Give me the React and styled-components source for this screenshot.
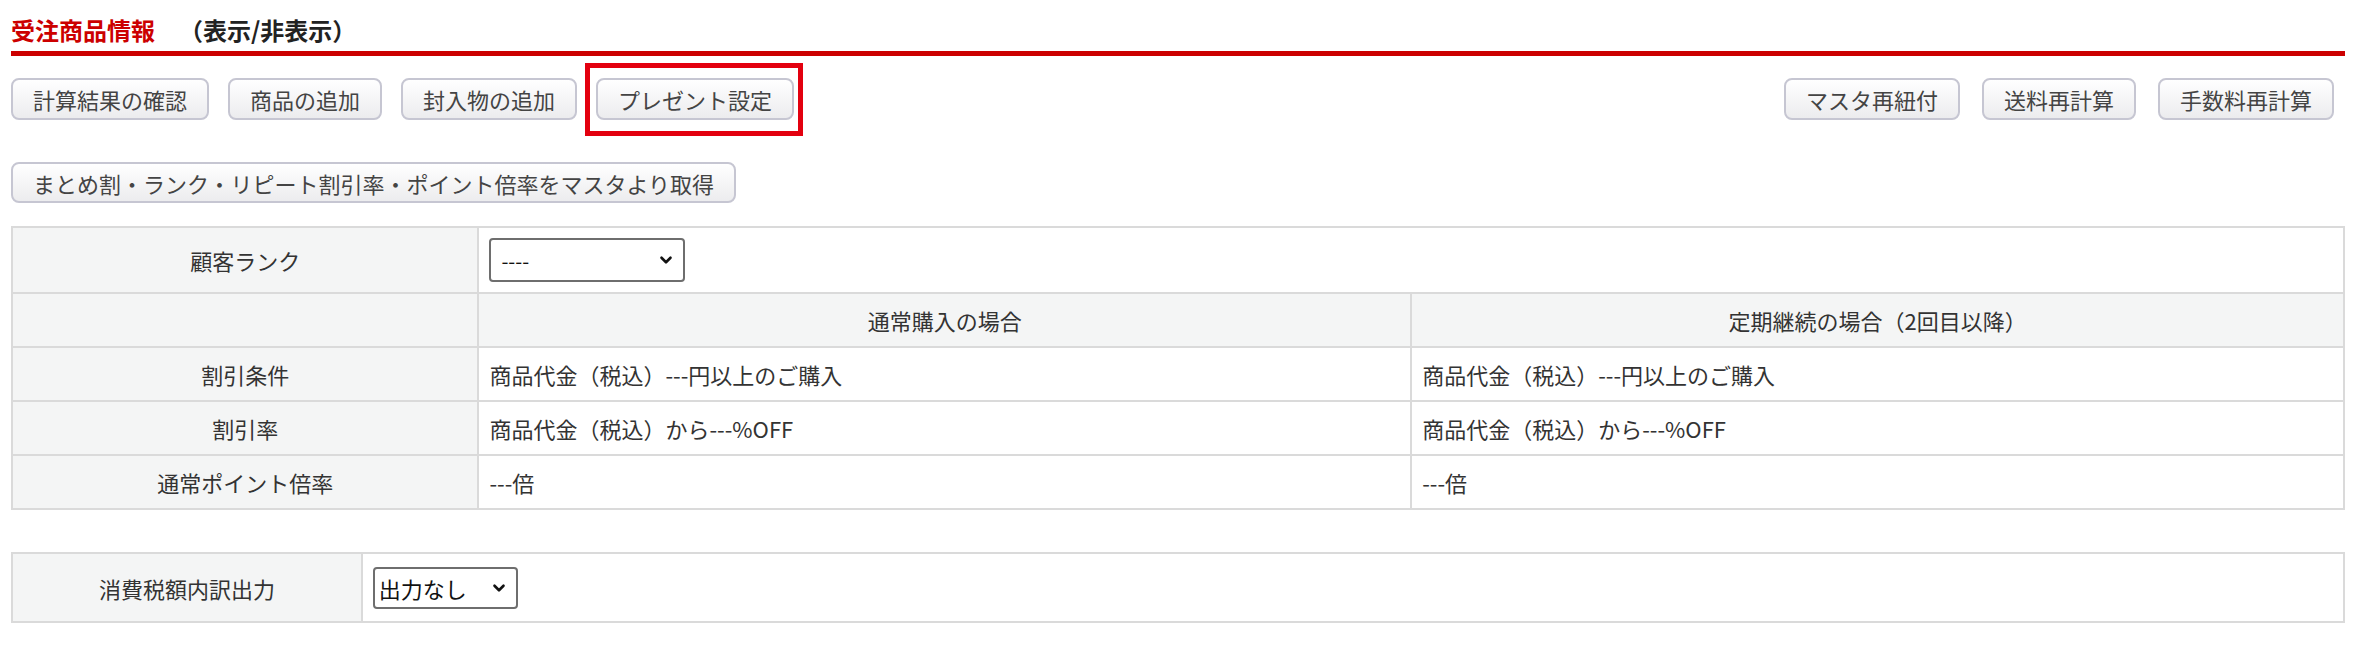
import React from "react";
import styled, { createGlobalStyle } from "styled-components";
import { ChevronDown } from "lucide-react";

const GlobalStyle = createGlobalStyle`
  body {
    margin: 0;
    background: #ffffff;
    font-family: "Noto Sans CJK JP", "Noto Sans", sans-serif;
    color: #333333;
  }
`;

const Page = styled.div`
  padding: 0 12px 30px 11px;
`;

const Header = styled.div`
  display: flex;
  align-items: center;
  padding-top: 8px;
  height: 43px;
  border-bottom: 5px solid #cc0000;
`;

const Title = styled.h2`
  margin: 0;
  font-size: 24px;
  line-height: 34px;
  font-weight: 700;
  color: #cc0000;
`;

const Toggle = styled.span`
  margin-left: 24px;
  font-size: 24px;
  line-height: 34px;
  font-weight: 700;
  color: #222222;
  cursor: pointer;
`;

const Toolbar = styled.div`
  display: flex;
  justify-content: space-between;
  align-items: center;
  margin-top: 22px;
  padding-right: ${(p) => p.$inset || 0}px;
`;

const Group = styled.div`
  display: flex;
  gap: ${(p) => p.$gap}px;
`;

const Button = styled.button`
  height: ${(p) => p.$h || 42}px;
  padding: 0 20px;
  border: 2px solid #c6c6d2;
  border-radius: 8px;
  background: linear-gradient(#ffffff, #ececee);
  font-family: inherit;
  font-size: 22px;
  color: #444444;
  white-space: nowrap;
  cursor: pointer;
`;

const Highlight = styled.span`
  position: relative;
  display: inline-flex;
  &::after {
    content: "";
    position: absolute;
    top: -15px;
    bottom: -16px;
    left: -11px;
    right: -9px;
    border: 5px solid #e3000f;
    pointer-events: none;
  }
`;

const Row = styled.div`
  margin-top: ${(p) => p.$top}px;
`;

const Table = styled.table`
  width: 100%;
  border-collapse: collapse;
  table-layout: fixed;
  margin-top: ${(p) => p.$top}px;
  font-size: 22px;
  color: #333333;
`;

const Th = styled.th`
  background: #f4f5f5;
  border: 2px solid #dadada;
  font-weight: 400;
  text-align: center;
  height: ${(p) => p.$h || 52}px;
  padding: 0 12px;
`;

const Td = styled.td`
  border: 2px solid #dadada;
  background: #ffffff;
  height: ${(p) => p.$h || 52}px;
  padding: 0 10px;
`;

const Select = styled.div`
  display: inline-flex;
  align-items: center;
  justify-content: space-between;
  box-sizing: border-box;
  width: ${(p) => p.$w}px;
  height: ${(p) => p.$h}px;
  padding: 0 8px 0 ${(p) => p.$pl}px;
  border: 2px solid #6e6e6e;
  border-radius: 4px;
  background: #ffffff;
  color: #111111;
  font-size: ${(p) => p.$fs}px;
`;

const Chevron = styled(ChevronDown)`
  color: #111111;
  flex: none;
`;

const leftButtons = ["計算結果の確認", "商品の追加", "封入物の追加"];
const rightButtons = ["マスタ再紐付", "送料再計算", "手数料再計算"];

const rows = [
  ["割引条件", "商品代金（税込）---円以上のご購入", "商品代金（税込）---円以上のご購入"],
  ["割引率", "商品代金（税込）から---%OFF", "商品代金（税込）から---%OFF"],
  ["通常ポイント倍率", "---倍", "---倍"],
];

export default function App() {
  return (
    <>
      <GlobalStyle />
      <Page>
        <Header>
          <Title>受注商品情報</Title>
          <Toggle>（表示/非表示）</Toggle>
        </Header>

        <Toolbar $inset={11}>
          <Group $gap={19}>
            {leftButtons.map((b) => (
              <Button key={b}>{b}</Button>
            ))}
            <Highlight>
              <Button>プレゼント設定</Button>
            </Highlight>
          </Group>
          <Group $gap={22}>
            {rightButtons.map((b) => (
              <Button key={b}>{b}</Button>
            ))}
          </Group>
        </Toolbar>

        <Row $top={42}>
          <Button $h={41}>まとめ割・ランク・リピート割引率・ポイント倍率をマスタより取得</Button>
        </Row>

        <Table $top={23}>
          <colgroup>
            <col style={{ width: "20%" }} />
            <col style={{ width: "40%" }} />
            <col style={{ width: "40%" }} />
          </colgroup>
          <tbody>
            <tr>
              <Th $h={64}>顧客ランク</Th>
              <Td $h={64} colSpan={2}>
                <Select $w={196} $h={44} $pl={10} $fs={20}>
                  <span>----</span>
                  <Chevron size={18} strokeWidth={3.5} />
                </Select>
              </Td>
            </tr>
            <tr>
              <Th></Th>
              <Th>通常購入の場合</Th>
              <Th>定期継続の場合（2回目以降）</Th>
            </tr>
            {rows.map(([label, a, b]) => (
              <tr key={label}>
                <Th>{label}</Th>
                <Td>{a}</Td>
                <Td>{b}</Td>
              </tr>
            ))}
          </tbody>
        </Table>

        <Table $top={42}>
          <colgroup>
            <col style={{ width: "15%" }} />
            <col style={{ width: "85%" }} />
          </colgroup>
          <tbody>
            <tr>
              <Th $h={67}>消費税額内訳出力</Th>
              <Td $h={67}>
                <Select $w={145} $h={42} $pl={4} $fs={22}>
                  <span>出力なし</span>
                  <Chevron size={18} strokeWidth={3.5} />
                </Select>
              </Td>
            </tr>
          </tbody>
        </Table>
      </Page>
    </>
  );
}
